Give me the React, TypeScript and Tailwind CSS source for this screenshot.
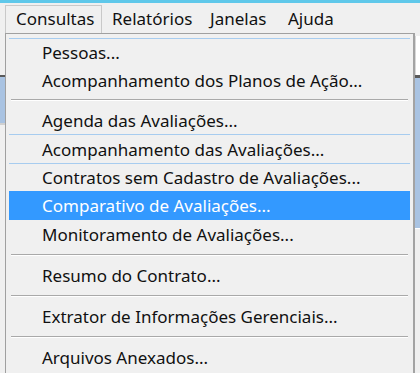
import React from 'react';

type Entry = { kind: 'item'; label: string; h: number; active?: boolean; line?: boolean } | { kind: 'sep' };

const entries: Entry[] = [
  { kind: 'item', label: 'Pessoas...', h: 28, line: true },
  { kind: 'item', label: 'Acompanhamento dos Planos de Ação...', h: 28 },
  { kind: 'sep' },
  { kind: 'item', label: 'Agenda das Avaliações...', h: 28 },
  { kind: 'item', label: 'Acompanhamento das Avaliações...', h: 29, line: true },
  { kind: 'item', label: 'Contratos sem Cadastro de Avaliações...', h: 28, line: true },
  { kind: 'item', label: 'Comparativo de Avaliações...', h: 29, active: true },
  { kind: 'item', label: 'Monitoramento de Avaliações...', h: 29 },
  { kind: 'sep' },
  { kind: 'item', label: 'Resumo do Contrato...', h: 29 },
  { kind: 'sep' },
  { kind: 'item', label: 'Extrator de Informações Gerenciais...', h: 29 },
  { kind: 'sep' },
  { kind: 'item', label: 'Arquivos Anexados...', h: 29 },
];

const heights: Record<number, string> = {
  28: 'h-[28px]',
  29: 'h-[29px]',
};

export default function App() {
  return (
    <div
      className="w-[420px] h-[373px] overflow-hidden bg-[#f0f0f0] text-[#111] text-[17px] leading-none"
      style={{ fontFamily: '"Noto Sans", "Open Sans", sans-serif' }}
    >
      <div className="h-[3px] bg-[#5fc8ea]" />

      {/* menu bar */}
      <div className="flex h-[30px] items-stretch pl-[5px]">
        <div className="flex items-center w-[97px] pl-[10px] border border-b-0 border-[#c9c9c9] mt-[2px] pb-[2px]">
          Consultas
        </div>
        <div className="flex items-center w-[98px] pl-[10px]">Relatórios</div>
        <div className="flex items-center w-[78px] pl-[10px]">Janelas</div>
        <div className="flex items-center pl-[10px]">Ajuda</div>
      </div>

      <div className="flex h-[340px]">
        {/* window behind, left */}
        <div className="w-[6px] flex flex-col border-r border-[#a0a0a0]">
          <div className="h-[42px]" />
          <div className="h-[2px] bg-[#5a5a5a]" />
          <div className="h-[46px] bg-[#a9c3e2]" />
          <div className="h-[2px] bg-[#d0d0d0]" />
        </div>

        {/* dropdown */}
        <div className="w-[409px] border-t border-[#a0a0a0] border-r-2 border-r-[#a3a3a3] pt-[4px] px-[3px] bg-[#f0f0f0]">
          {entries.map((e, i) =>
            e.kind === 'sep' ? (
              <div key={i} className="h-[12px] flex flex-col justify-center px-[2px]">
                <div className="h-[1px] bg-[#a9a9a9]" />
                <div className="h-[1px] bg-white" />
              </div>
            ) : (
              <div
                key={i}
                className={`${heights[e.h]} flex items-center pl-[33px] ${
                  e.active ? 'bg-[#3399ff] text-white' : ''
                } ${e.line ? 'border-t border-[#a7ccef]' : ''}`}
              >
                {e.label}
              </div>
            )
          )}
        </div>

        {/* window behind, right */}
        <div className="flex-1 flex flex-col">
          <div className="h-[3px]" />
          <div className="h-[39px] bg-white border-l border-[#d8d8d8]" />
          <div className="h-[3px] bg-[#5a5a5a]" />
          <div className="h-[150px] bg-[#a9c3e2]" />
          <div className="h-[1px] bg-white" />
        </div>
      </div>
    </div>
  );
}
